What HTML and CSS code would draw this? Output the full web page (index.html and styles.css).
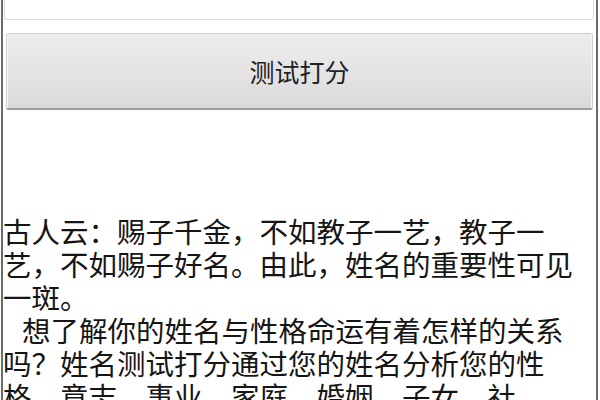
FILE: index.html
```html
<!DOCTYPE html>
<html lang="zh-CN">
<head>
<meta charset="utf-8">
<title>姓名测试打分</title>
<link rel="stylesheet" href="styles.css">
</head>
<body>
<div class="frame">
  <div class="name-input"></div>
  <div class="score-btn">测试打分</div>
  <div class="intro">
    <p>古人云：赐子千金，不如教子一艺，教子一艺，不如赐子好名。由此，姓名的重要性可见一斑。</p>
    <p class="indent">想了解你的姓名与性格命运有着怎样的关系吗？姓名测试打分通过您的姓名分析您的性格、意志、事业、家庭、婚姻、子女、社<br>会关系等各方面。</p>
  </div>
</div>
</body>
</html>
```

FILE: styles.css
```css
html, body {
  margin: 0;
  padding: 0;
  background: #ffffff;
  overflow: hidden;
}

.frame {
  box-sizing: border-box;
  margin: 0 2px 0 1px;
  height: 400px;
  border-left: 2px solid #6b6b6b;
  border-right: 2px solid #6b6b6b;
  overflow: hidden;
  font-family: "Noto Sans CJK SC", "Noto Sans", sans-serif;
}

.name-input {
  box-sizing: border-box;
  margin: -20px 2px 0 1px;
  height: 40px;
  background: #ffffff;
  border: 1px solid #dcdcdc;
  border-radius: 2px;
}

.score-btn {
  box-sizing: border-box;
  margin: 13px 3px 0 3px;
  height: 77px;
  display: flex;
  align-items: center;
  justify-content: center;
  background: linear-gradient(#ededed, #e2e2e2 60%, #d9d9d9);
  border: 1px solid #cfcfcf;
  border-bottom: 2px solid #9e9e9e;
  border-radius: 2px;
  box-shadow: inset 1px 0 0 #f4f4f4, inset -1px 0 0 #f4f4f4;
  font-size: 25px;
  color: #222222;
}

.intro {
  margin: 104px 3px 0 0;
  font-size: 28.5px;
  line-height: 33px;
  color: #151515;
}

.intro p {
  margin: 0;
}

.intro .indent {
  text-indent: 19px;
}
```
